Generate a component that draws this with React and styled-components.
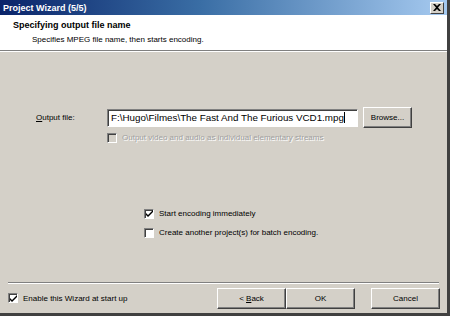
import React from "react";
import styled, { createGlobalStyle } from "styled-components";

const GlobalStyle = createGlobalStyle`
  html, body {
    margin: 0;
    padding: 0;
    background: #d4d0c8;
  }
  body {
    font-family: "Liberation Sans", Arial, sans-serif;
    font-size: 8px;
    color: #000;
  }
`;

export default function App() {
  return (
    <>
      <GlobalStyle />
      <Window>
        <TitleBar>
          <TitleText>Project Wizard (5/5)</TitleText>
          <CloseBtn>
            <svg width="8" height="7" viewBox="0 0 8 7">
              <path d="M0 0h2l2 2 2-2h2L5 3.5 8 7H6L4 5 2 7H0l3-3.5z" fill="#000" />
            </svg>
          </CloseBtn>
        </TitleBar>
        <Header>
          <HeaderTitle>Specifying output file name</HeaderTitle>
          <HeaderSub>Specifies MPEG file name, then starts encoding.</HeaderSub>
        </Header>
        <Body>
          <FileRow>
            <Label>
              <u>O</u>utput file:
            </Label>
            <TextBox>
              F:\Hugo\Filmes\The Fast And The Furious VCD1.mpg
              <Caret />
            </TextBox>
            <Button width={49}>Browse...</Button>
          </FileRow>
          <Option indent={107} disabled>
            <Check disabled />
            <span>Output video and audio as individual elementary streams</span>
          </Option>
          <Options>
            <Option>
              <Check checked />
              <span>Start encoding immediately</span>
            </Option>
            <Option>
              <Check />
              <span>Create another project(s) for batch encoding.</span>
            </Option>
          </Options>
        </Body>
        <Footer>
          <Option>
            <Check checked />
            <span>Enable this Wizard at start up</span>
          </Option>
          <Buttons>
            <Button width={69}>
              <span>
                &lt; <u>B</u>ack
              </span>
            </Button>
            <Button width={69}>OK</Button>
            <Button width={69} gap>
              Cancel
            </Button>
          </Buttons>
        </Footer>
      </Window>
    </>
  );
}

const Check = ({ checked, disabled }) => (
  <CheckBox disabled={disabled}>
    {checked && (
      <svg width="7" height="7" viewBox="0 0 7 7">
        <path d="M0 3l2 2 5-5v2L2 7 0 5z" fill="#000" />
      </svg>
    )}
  </CheckBox>
);

const Window = styled.div`
  width: 450px;
  height: 316px;
  box-sizing: border-box;
  display: flex;
  flex-direction: column;
  border-right: 3px solid #404040;
  border-bottom: 3px solid #404040;
  background: #d4d0c8;
`;

const TitleBar = styled.div`
  height: 15px;
  display: flex;
  align-items: center;
  justify-content: space-between;
  padding: 0 3px 0 3px;
  background: linear-gradient(to right, #0a246a, #3a6ea5 45%, #a6caf0);
`;

const TitleText = styled.div`
  color: #fff;
  font-weight: bold;
  font-size: 9px;
`;

const CloseBtn = styled.div`
  width: 14px;
  height: 12px;
  box-sizing: border-box;
  background: #d4d0c8;
  border: 1px solid;
  border-color: #fff #404040 #404040 #fff;
  display: flex;
  align-items: center;
  justify-content: center;
`;

const Header = styled.div`
  height: 36px;
  background: #fff;
  border-bottom: 1px solid #808080;
  box-shadow: 0 1px 0 #fff;
  padding: 3px 0 0 13px;
  box-sizing: border-box;
`;

const HeaderTitle = styled.div`
  font-weight: bold;
  font-size: 9px;
  margin-top: 2px;
`;

const HeaderSub = styled.div`
  margin: 5px 0 0 19px;
`;

const Body = styled.div`
  flex: 1;
  padding: 56px 0 0 36px;
`;

const FileRow = styled.div`
  display: flex;
  align-items: center;
`;

const Label = styled.div`
  width: 71px;
`;

const TextBox = styled.div`
  width: 251px;
  height: 18px;
  box-sizing: border-box;
  background: #fff;
  border: 1px solid;
  border-color: #808080 #fff #fff #808080;
  box-shadow: inset 1px 1px 0 #404040;
  padding: 2px 0 0 3px;
  margin-right: 5px;
  font-size: 9.8px;
  white-space: nowrap;
  overflow: hidden;
`;

const Caret = styled.span`
  display: inline-block;
  width: 1px;
  height: 11px;
  background: #000;
  vertical-align: -2px;
`;

const Button = styled.div`
  width: ${(p) => p.width}px;
  height: 21px;
  box-sizing: border-box;
  background: #d4d0c8;
  border: 1px solid;
  border-color: #fff #404040 #404040 #fff;
  box-shadow: inset -1px -1px 0 #808080;
  display: flex;
  align-items: center;
  justify-content: center;
  margin-left: ${(p) => (p.gap ? 16 : 0)}px;
`;

const Option = styled.div`
  display: flex;
  align-items: center;
  gap: 5px;
  height: 19px;
  margin-left: ${(p) => (p.indent ? p.indent - 36 : 0)}px;
  color: ${(p) => (p.disabled ? "#a0a0a0" : "#000")};
  text-shadow: ${(p) => (p.disabled ? "1px 1px 0 #fff" : "none")};
`;

const Options = styled.div`
  margin: 57px 0 0 108px;
`;

const CheckBox = styled.div`
  width: 10px;
  height: 10px;
  box-sizing: border-box;
  background: ${(p) => (p.disabled ? "#d4d0c8" : "#fff")};
  border: 1px solid;
  border-color: #808080 #fff #fff #808080;
  box-shadow: inset 1px 1px 0 #404040;
  display: flex;
  align-items: center;
  justify-content: center;
`;

const Footer = styled.div`
  height: 30px;
  margin: 0 8px 0 8px;
  border-top: 1px solid #808080;
  box-shadow: inset 0 1px 0 #fff;
  display: flex;
  align-items: center;
  justify-content: space-between;
`;

const Buttons = styled.div`
  display: flex;
  margin-right: -1px;
`;
